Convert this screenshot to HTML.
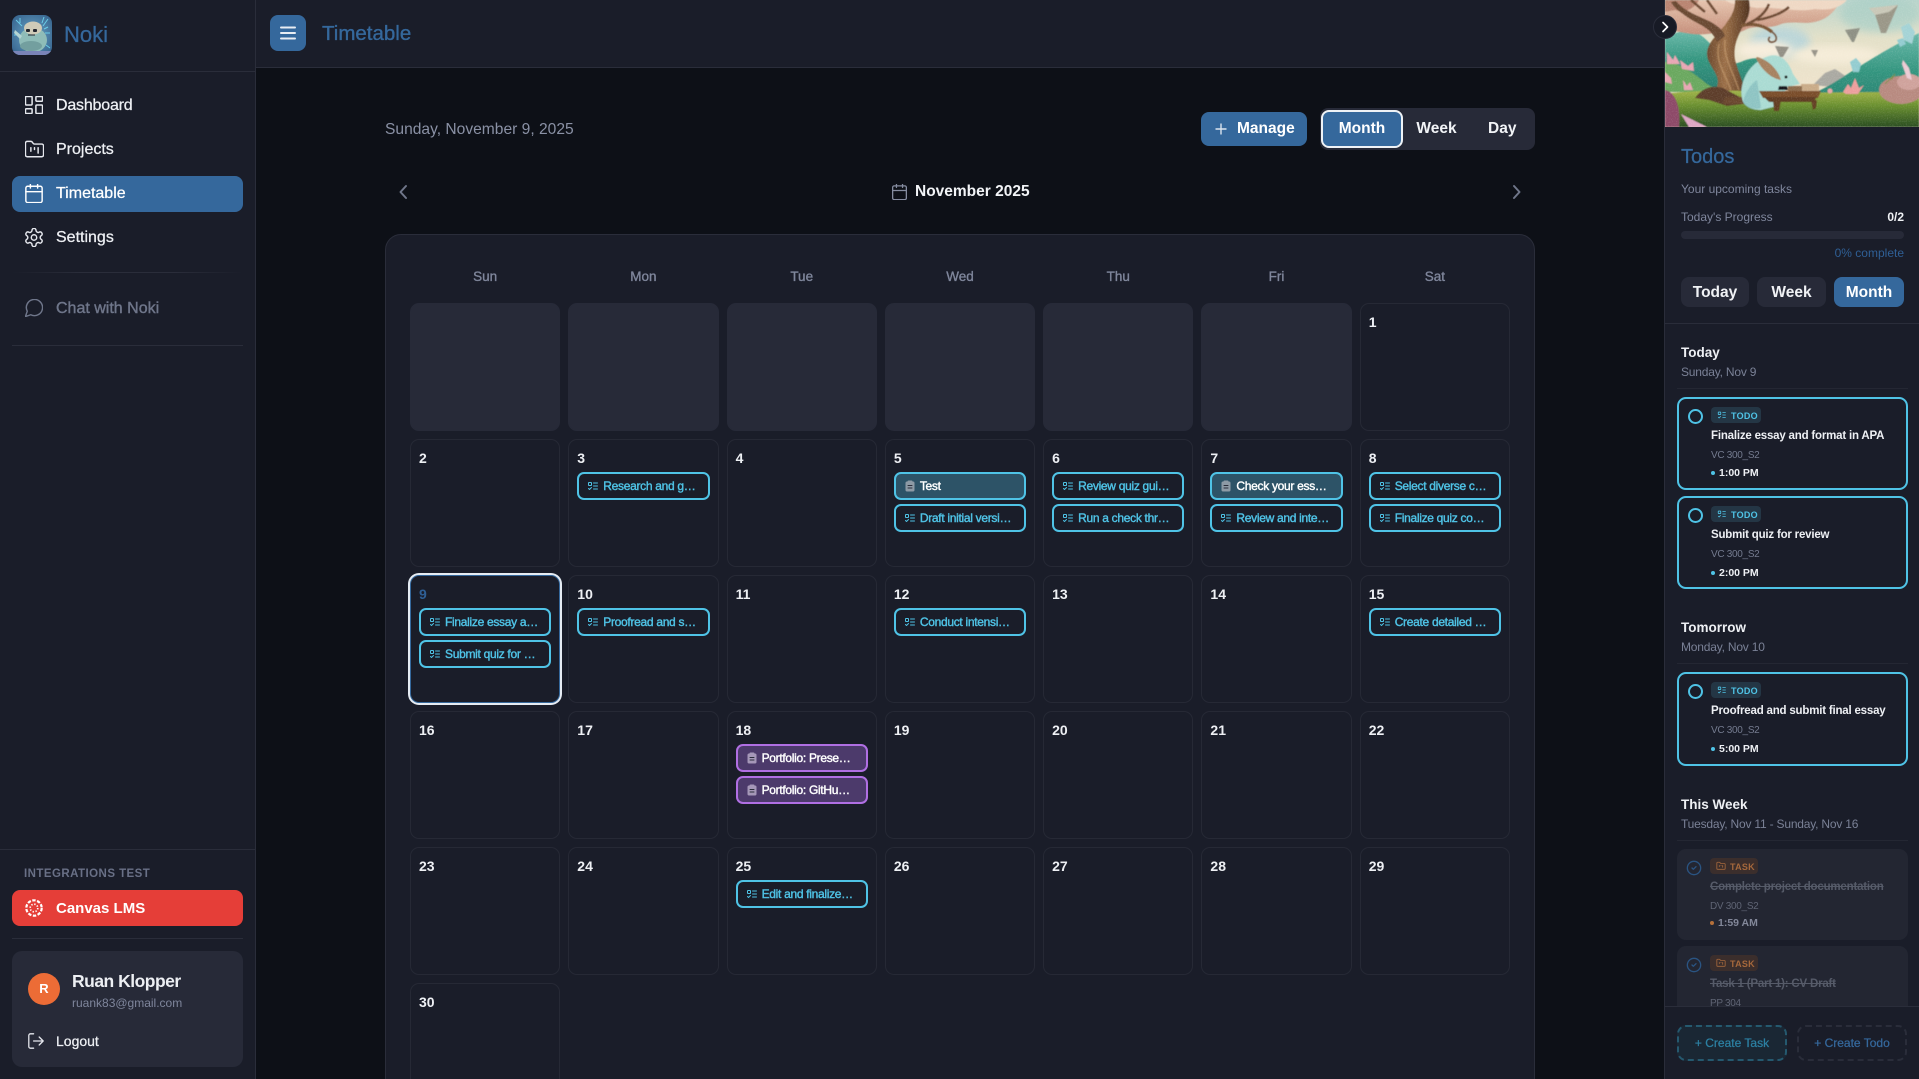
<!DOCTYPE html>
<html lang="en"><head><meta charset="utf-8"><title>Noki - Timetable</title>
<style>
*{box-sizing:border-box}
html,body{margin:0;padding:0;width:1919px;height:1079px;overflow:hidden;background:#0d1017}
body{position:relative;font-family:"Liberation Sans",sans-serif;color:#f0f2f5}
.a{position:absolute}
.t{position:absolute;white-space:nowrap;line-height:20px}
.m{-webkit-text-stroke:.25px currentColor}
.b{font-weight:700}
svg{display:block}
.ic{position:absolute;fill:none;stroke:currentColor;stroke-width:2;stroke-linecap:round;stroke-linejoin:round}
.nav{font-size:16px;left:56px;color:#eef0f4}
.grid{position:absolute;left:410px;display:grid;grid-template-columns:repeat(7,150.29px);column-gap:8px}
.wd{text-align:center;font-size:13.5px;line-height:20px;color:#7f869b;-webkit-text-stroke:.35px #7f869b}
.cell{position:relative;height:128px;margin-bottom:8px;border:1px solid #262935;border-radius:9px;background:#1a1d29}
.e{background:#272a38;border-color:#272a38}
.today{border-color:#35689c;box-shadow:0 0 0 2px #e6ecf3;border-radius:9px}
.n{position:absolute;left:8px;top:8px;font-size:14px;font-weight:700;line-height:20px;color:#eef0f4}
.cs{position:absolute;left:8px;top:32px;width:132.3px}
.c{display:flex;align-items:center;height:28px;margin-bottom:4px;border:2px solid #4fc3e6;border-radius:7px;padding-left:8px;color:#4fc3e6;font-size:12px;letter-spacing:-.3px;white-space:nowrap;-webkit-text-stroke:.4px currentColor;overflow:hidden}
.c svg{flex:none;width:12px;height:12px;margin-right:4px;fill:none;stroke:currentColor;stroke-width:2;stroke-linecap:round;stroke-linejoin:round}
.f{background:#2d5367;color:#fff}
.f svg{fill:#8d9aa5;stroke:#8d9aa5}
.p{background:#4c3a6b;border-color:#b06fe3;color:#fff}
.p svg{fill:#a597b8;stroke:#a597b8}
.card{position:absolute;left:1677px;width:231px;border:2px solid #4fc3e6;border-radius:9px;background:#1a1d29}
.ring{position:absolute;left:9px;top:10px;width:15px;height:15px;border:2px solid #4fc3e6;border-radius:50%}
.bdg{position:absolute;left:32px;top:8px;width:50px;height:16px;background:#243645;border-radius:4px;color:#4fc3e6;font-size:9px;font-weight:700;letter-spacing:.25px;line-height:18px;padding-left:20px}
.bdg svg{position:absolute;left:6px;top:3px;width:10px;height:10px;fill:none;stroke:currentColor;stroke-width:2}
.tt{position:absolute;left:32px;top:19px;font-size:11.5px;letter-spacing:-.2px;font-weight:700;color:#eef0f4;white-space:nowrap;line-height:36px;height:36px}
.cr{position:absolute;left:32px;top:47px;font-size:10px;letter-spacing:-.3px;color:#747b8f;line-height:20px}
.tm{position:absolute;left:40px;top:64px;font-size:10.5px;font-weight:700;color:#eef0f4;line-height:20px}
.dt{position:absolute;left:32px;top:72px;width:4px;height:4px;border-radius:50%;background:#4fc3e6}
.h{position:absolute;left:1681px;font-size:13.5px;font-weight:700;line-height:20px;color:#eef0f4}
.s{position:absolute;left:1681px;font-size:12px;letter-spacing:-.2px;line-height:20px;color:#7a8196;white-space:nowrap}
.ln{position:absolute;left:1677px;width:231px;height:1px;background:#242733}
.task{position:absolute;left:1677px;width:231px;height:91px;border-radius:9px;background:#232632}
.task svg.ck{position:absolute;left:9px;top:11px;width:16px;height:16px;fill:none;stroke:#2a5482;stroke-width:2;stroke-linecap:round;stroke-linejoin:round}
.task .bdg{left:33px;top:9px;width:48px;background:#3b2e2c;color:#a5683c;padding-left:20px}
.task .tt{left:33px;top:20px;color:#565b69;text-decoration:line-through}
.task .cr{left:33px;top:48px;color:#5f6474}
.task .tm{left:41px;top:64px;color:#83889a}
.task .dt{left:33px;top:72px;background:#b5703a}
.btn{position:absolute;text-align:center;border-radius:8px;font-size:15.5px;font-weight:700;color:#f0f2f5;background:#272a38;top:277px;height:30px;line-height:31px}
</style></head><body>
<svg width="0" height="0" style="position:absolute">
<symbol id="todo" viewBox="0 0 24 24"><rect x="3" y="5" width="6" height="6" rx="1"/><path d="m3 17 2 2 4-4M13 6h8M13 12h8M13 18h8"/></symbol>
<symbol id="clip" viewBox="0 0 24 24"><path d="M16 4h2a2 2 0 0 1 2 2v14a2 2 0 0 1-2 2H6a2 2 0 0 1-2-2V6a2 2 0 0 1 2-2h2"/><rect x="8" y="2" width="8" height="4" rx="1"/><path d="M8 11h8M8 16h8" stroke="#2a2d3a"/></symbol>
<symbol id="fk" viewBox="0 0 24 24"><path d="M4 20h16a2 2 0 0 0 2-2V8a2 2 0 0 0-2-2h-7.93a2 2 0 0 1-1.66-.9l-.82-1.2A2 2 0 0 0 7.93 3H4a2 2 0 0 0-2 2v13c0 1.1.9 2 2 2ZM8 10v4M12 10v2M16 10v6"/></symbol>
</svg>

<!-- main background -->
<div class="a" style="left:256px;top:0;width:1408px;height:1079px;background:#0d1017"></div>

<!-- SIDEBAR -->
<div class="a" style="left:0;top:0;width:256px;height:1079px;background:#1a1d29;border-right:1px solid #2a2d3a"></div>
<div class="a" style="left:0;top:71px;width:255px;height:1px;background:#2a2d3a"></div>
<svg class="a" style="left:12px;top:15px;border-radius:8px" width="40" height="40" viewBox="0 0 40 40">
<defs><radialGradient id="lg" cx=".5" cy=".5" r=".75"><stop offset="0" stop-color="#6aa6c8"/><stop offset="1" stop-color="#2f5a85"/></radialGradient></defs>
<rect width="40" height="40" fill="url(#lg)"/>
<g stroke="#72dcf4" stroke-width="1" opacity=".85"><path d="M4 5l6 6M36 4l-5 7M2 20h5M38 18h-5M34 30l4 3M8 8V3M30 8l2-6M36 12l-4 2"/></g>
<ellipse cx="21" cy="25" rx="14" ry="12.5" fill="#8fbcb8"/>
<ellipse cx="21" cy="13" rx="9" ry="6.5" fill="#cfcbb8"/>
<path d="M3 15l7 6-2 3-6-6z" fill="#b4d4d2"/>
<ellipse cx="19" cy="31" rx="11" ry="5" fill="#739f9f"/>
<rect x="14" y="14" width="4" height="3" rx="1" fill="#23262f"/><rect x="21" y="14" width="4" height="3" rx="1" fill="#23262f"/>
<path d="M16 20h7" stroke="#23262f" stroke-width="1"/>
<rect y="36" width="40" height="4" fill="#7a84b8"/>
</svg>
<div class="t m" style="left:64px;top:25px;font-size:22px;color:#35689c">Noki</div>

<svg class="ic" style="left:25px;top:96px;color:#e6e8ee;stroke-width:1.6" width="18" height="18" viewBox="2.5 2.5 19 19"><rect x="3" y="3" width="7" height="9" rx="1"/><rect x="14" y="3" width="7" height="5" rx="1"/><rect x="14" y="12" width="7" height="9" rx="1"/><rect x="3" y="16" width="7" height="5" rx="1"/></svg>
<div class="t nav m" style="top:96px;letter-spacing:-.2px">Dashboard</div>
<svg class="ic" style="left:25px;top:140px;color:#e6e8ee;stroke-width:1.6" width="19" height="19" viewBox="1.5 1.5 21 21"><path d="M4 20h16a2 2 0 0 0 2-2V8a2 2 0 0 0-2-2h-7.93a2 2 0 0 1-1.66-.9l-.82-1.2A2 2 0 0 0 7.93 3H4a2 2 0 0 0-2 2v13c0 1.1.9 2 2 2ZM8 10v4M12 10v2M16 10v6"/></svg>
<div class="t nav m" style="top:140px">Projects</div>
<div class="a" style="left:12px;top:176px;width:231px;height:36px;background:#35689c;border-radius:8px"></div>
<svg class="ic" style="left:25px;top:184px;color:#fff;stroke-width:1.6" width="18" height="19" viewBox="2.5 1.5 19 21"><path d="M8 2v4M16 2v4M3 10h18"/><rect x="3" y="4" width="18" height="18" rx="2"/></svg>
<div class="t nav m" style="top:184px;color:#fff">Timetable</div>
<svg class="ic" style="left:25px;top:228px;color:#e6e8ee;stroke-width:1.6" width="18" height="19" viewBox="2.5 1.5 19 21"><path d="M12.22 2h-.44a2 2 0 0 0-2 2v.18a2 2 0 0 1-1 1.73l-.43.25a2 2 0 0 1-2 0l-.15-.08a2 2 0 0 0-2.73.73l-.22.38a2 2 0 0 0 .73 2.73l.15.1a2 2 0 0 1 1 1.72v.51a2 2 0 0 1-1 1.74l-.15.09a2 2 0 0 0-.73 2.73l.22.38a2 2 0 0 0 2.73.73l.15-.08a2 2 0 0 1 2 0l.43.25a2 2 0 0 1 1 1.73V20a2 2 0 0 0 2 2h.44a2 2 0 0 0 2-2v-.18a2 2 0 0 1 1-1.73l.43-.25a2 2 0 0 1 2 0l.15.08a2 2 0 0 0 2.73-.73l.22-.39a2 2 0 0 0-.73-2.73l-.15-.08a2 2 0 0 1-1-1.74v-.5a2 2 0 0 1 1-1.74l.15-.09a2 2 0 0 0 .73-2.73l-.22-.38a2 2 0 0 0-2.73-.73l-.15.08a2 2 0 0 1-2 0l-.43-.25a2 2 0 0 1-1-1.73V4a2 2 0 0 0-2-2z"/><circle cx="12" cy="12" r="3"/></svg>
<div class="t nav m" style="top:228px">Settings</div>
<div class="a" style="left:12px;top:272px;width:231px;height:1px;background:linear-gradient(90deg,#1a1d29,#2a2d3a 30%,#2a2d3a 70%,#1a1d29)"></div>
<svg class="ic" style="left:25px;top:299px;color:#6f768a;stroke-width:1.6" width="18" height="18" viewBox="1.5 2.5 20 20"><path d="M7.9 20A9 9 0 1 0 4 16.1L2 22Z"/></svg>
<div class="t nav m" style="top:299px;color:#6f768a;-webkit-text-stroke:.4px #6f768a">Chat with Noki</div>
<div class="a" style="left:12px;top:345px;width:231px;height:1px;background:#2a2d3a"></div>

<div class="a" style="left:0;top:849px;width:255px;height:1px;background:#2a2d3a"></div>
<div class="t b" style="left:24px;top:864px;font-size:11.5px;letter-spacing:.45px;color:#697086">INTEGRATIONS TEST</div>
<div class="a" style="left:12px;top:890px;width:231px;height:36px;background:#e53e38;border-radius:8px"></div>
<svg class="a" style="left:25px;top:899px" width="18" height="18" viewBox="0 0 18 18" fill="none" stroke="#fff"><circle cx="9" cy="9" r="7.7" stroke-width="2.2" stroke-dasharray="3.4 1.5"/><circle cx="9" cy="9" r="3.8" stroke-width="1.6" stroke-dasharray="1.4 1.6"/></svg>
<div class="t nav b" style="top:899px;color:#fff;font-size:15px">Canvas LMS</div>
<div class="a" style="left:12px;top:938px;width:231px;height:1px;background:#2a2d3a"></div>
<div class="a" style="left:12px;top:951px;width:231px;height:116px;background:#272a38;border-radius:10px"></div>
<div class="a" style="left:28px;top:973px;width:32px;height:32px;border-radius:50%;background:#ec6c36;color:#fff;font-size:13px;font-weight:700;text-align:center;line-height:32px">R</div>
<div class="t b" style="left:72px;top:971px;font-size:17.5px;color:#edeff3;letter-spacing:-.5px">Ruan Klopper</div>
<div class="t" style="left:72px;top:993px;font-size:12px;color:#7f869c">ruank83@gmail.com</div>
<svg class="ic" style="left:28px;top:1033px;color:#e6e8ee;stroke-width:1.6" width="16" height="16" viewBox="2 2 20 20"><path d="M9 21H5a2 2 0 0 1-2-2V5a2 2 0 0 1 2-2h4M16 17l5-5-5-5M21 12H9"/></svg>
<div class="t m" style="left:56px;top:1031px;font-size:14px;color:#eef0f4">Logout</div>

<!-- HEADER -->
<div class="a" style="left:256px;top:0;width:1408px;height:68px;background:#1a1d29;border-bottom:1px solid #2a2d3a"></div>
<div class="a" style="left:270px;top:15px;width:36px;height:36px;border-radius:8px;background:#35689c"></div>
<svg class="a" style="left:280px;top:26px" width="16" height="14" viewBox="0 0 16 14" stroke="#e8edf3" stroke-width="2" stroke-linecap="round"><path d="M1 1.5h14M1 7h14M1 12.5h14"/></svg>
<div class="t m" style="left:322px;top:24px;font-size:20.5px;color:#35689c;-webkit-text-stroke:.35px #35689c">Timetable</div>

<!-- TOOLBAR -->
<div class="t" style="left:385px;top:120px;font-size:15.6px;color:#8a91a5">Sunday, November 9, 2025</div>
<div class="a" style="left:1201px;top:112px;width:106px;height:34px;background:#35689c;border-radius:8px"></div>
<svg class="a" style="left:1215px;top:123px" width="12" height="12" viewBox="0 0 12 12" stroke="#dbe4ee" stroke-width="1.4"><path d="M6 .5v11M.5 6h11"/></svg>
<div class="t b" style="left:1237px;top:119px;font-size:15.5px;color:#fff">Manage</div>
<div class="a" style="left:1320px;top:108px;width:215px;height:42px;background:#272a38;border-radius:8px"></div>
<div class="a" style="left:1321px;top:110px;width:82px;height:38px;background:#35689c;border:2px solid #eef2f6;border-radius:8px;text-align:center;line-height:33px;font-size:15.5px;font-weight:700;color:#fff">Month</div>
<div class="t b" style="left:1416px;width:41px;text-align:center;top:119px;font-size:15.5px;color:#f2f4f7">Week</div>
<div class="t b" style="left:1488px;width:26px;text-align:center;top:119px;font-size:15.5px;color:#f2f4f7">Day</div>

<svg class="ic" style="left:398px;top:184px;color:#6f768a;stroke-width:2" width="10" height="16" viewBox="0 0 10 16"><path d="M8 2L2.5 8 8 14"/></svg>
<svg class="ic" style="left:1512px;top:184px;color:#6f768a;stroke-width:2" width="10" height="16" viewBox="0 0 10 16"><path d="M2 2l5.5 6L2 14"/></svg>
<svg class="ic" style="left:892px;top:184px;color:#858ca0;stroke-width:1.7" width="15" height="16" viewBox="2.5 1.5 19 21"><path d="M8 2v4M16 2v4M3 10h18"/><rect x="3" y="4" width="18" height="18" rx="2"/></svg>
<div class="t b" style="left:915px;top:182px;font-size:15.5px;color:#f2f4f7">November 2025</div>

<!-- CALENDAR -->
<div class="a" style="left:385px;top:234px;width:1150px;height:860px;background:#1a1d29;border:1px solid #2a2d3a;border-radius:16px"></div>
<div class="grid" style="top:267px">
<div class="wd">Sun</div><div class="wd">Mon</div><div class="wd">Tue</div><div class="wd">Wed</div><div class="wd">Thu</div><div class="wd">Fri</div><div class="wd">Sat</div>
</div>
<div class="grid" style="top:303px">
<div class="cell e"></div><div class="cell e"></div><div class="cell e"></div><div class="cell e"></div><div class="cell e"></div><div class="cell e"></div>
<div class="cell"><div class="n">1</div></div>

<div class="cell"><div class="n">2</div></div>
<div class="cell"><div class="n">3</div><div class="cs"><div class="c"><svg><use href="#todo"/></svg>Research and g…</div></div></div>
<div class="cell"><div class="n">4</div></div>
<div class="cell"><div class="n">5</div><div class="cs"><div class="c f"><svg><use href="#clip"/></svg>Test</div><div class="c"><svg><use href="#todo"/></svg>Draft initial versi…</div></div></div>
<div class="cell"><div class="n">6</div><div class="cs"><div class="c"><svg><use href="#todo"/></svg>Review quiz gui…</div><div class="c"><svg><use href="#todo"/></svg>Run a check thr…</div></div></div>
<div class="cell"><div class="n">7</div><div class="cs"><div class="c f"><svg><use href="#clip"/></svg>Check your ess…</div><div class="c"><svg><use href="#todo"/></svg>Review and inte…</div></div></div>
<div class="cell"><div class="n">8</div><div class="cs"><div class="c"><svg><use href="#todo"/></svg>Select diverse c…</div><div class="c"><svg><use href="#todo"/></svg>Finalize quiz co…</div></div></div>

<div class="cell today"><div class="n" style="color:#2f5f95">9</div><div class="cs"><div class="c"><svg><use href="#todo"/></svg>Finalize essay a…</div><div class="c"><svg><use href="#todo"/></svg>Submit quiz for …</div></div></div>
<div class="cell"><div class="n">10</div><div class="cs"><div class="c"><svg><use href="#todo"/></svg>Proofread and s…</div></div></div>
<div class="cell"><div class="n">11</div></div>
<div class="cell"><div class="n">12</div><div class="cs"><div class="c"><svg><use href="#todo"/></svg>Conduct intensi…</div></div></div>
<div class="cell"><div class="n">13</div></div>
<div class="cell"><div class="n">14</div></div>
<div class="cell"><div class="n">15</div><div class="cs"><div class="c"><svg><use href="#todo"/></svg>Create detailed …</div></div></div>

<div class="cell"><div class="n">16</div></div>
<div class="cell"><div class="n">17</div></div>
<div class="cell"><div class="n">18</div><div class="cs"><div class="c p"><svg><use href="#clip"/></svg>Portfolio: Prese…</div><div class="c p"><svg><use href="#clip"/></svg>Portfolio: GitHu…</div></div></div>
<div class="cell"><div class="n">19</div></div>
<div class="cell"><div class="n">20</div></div>
<div class="cell"><div class="n">21</div></div>
<div class="cell"><div class="n">22</div></div>

<div class="cell"><div class="n">23</div></div>
<div class="cell"><div class="n">24</div></div>
<div class="cell"><div class="n">25</div><div class="cs"><div class="c"><svg><use href="#todo"/></svg>Edit and finalize…</div></div></div>
<div class="cell"><div class="n">26</div></div>
<div class="cell"><div class="n">27</div></div>
<div class="cell"><div class="n">28</div></div>
<div class="cell"><div class="n">29</div></div>

<div class="cell"><div class="n">30</div></div>
</div>

<!-- RIGHT PANEL -->
<div class="a" style="left:1664px;top:0;width:255px;height:1079px;background:#1a1d29;border-left:1px solid #2a2d3a"></div>
<svg class="a" style="left:1665px;top:0" width="254" height="127" viewBox="0 0 254 127" preserveAspectRatio="none">
<defs>
<linearGradient id="sky" x1="0" y1="0" x2="0" y2="1"><stop offset="0" stop-color="#b9d4cc"/><stop offset=".3" stop-color="#e3e0c8"/><stop offset=".7" stop-color="#efe3cc"/><stop offset="1" stop-color="#e0cdb8"/></linearGradient>
<linearGradient id="gr" x1="0" y1="0" x2="0" y2="1"><stop offset="0" stop-color="#a0b348"/><stop offset=".4" stop-color="#6b9030"/><stop offset="1" stop-color="#2a4d22"/></linearGradient>
<linearGradient id="tr" x1="0" y1="0" x2="1" y2="0"><stop offset="0" stop-color="#553622"/><stop offset=".5" stop-color="#9c7048"/><stop offset="1" stop-color="#4c2f1d"/></linearGradient>
<linearGradient id="hl" x1="0" y1="0" x2="0" y2="1"><stop offset="0" stop-color="#6ab8a9"/><stop offset=".5" stop-color="#33957f"/><stop offset="1" stop-color="#287d6f"/></linearGradient>
<linearGradient id="fo" x1="0" y1="0" x2="0" y2="1"><stop offset="0" stop-color="#e6c4ae"/><stop offset="1" stop-color="#c58f7b"/></linearGradient>
<filter id="bl" x="-10%" y="-10%" width="120%" height="120%"><feGaussianBlur stdDeviation=".6"/></filter>
<filter id="bl2" x="-20%" y="-20%" width="140%" height="140%"><feGaussianBlur stdDeviation="4"/></filter>
<filter id="noise" x="0" y="0" width="100%" height="100%"><feTurbulence type="fractalNoise" baseFrequency=".8" numOctaves="2" seed="4"/><feColorMatrix values="0 0 0 0 1  0 0 0 0 1  0 0 0 0 .95  1.6 0 0 0 -.72"/></filter>
</defs>
<rect width="254" height="127" fill="url(#sky)"/>
<ellipse cx="115" cy="42" rx="30" ry="16" fill="#bcd6d8" filter="url(#bl2)"/>
<ellipse cx="215" cy="14" rx="40" ry="18" fill="#a9cfc6" opacity=".7" filter="url(#bl2)"/>
<ellipse cx="100" cy="50" rx="28" ry="9" fill="#f7eddc" filter="url(#bl2)"/>
<ellipse cx="170" cy="55" rx="45" ry="9" fill="#f5ecd8" filter="url(#bl2)"/>
<g filter="url(#bl)">
<path d="M148 85l12-12 10-4 12 8 10-3 6 16z" fill="#aaa9a2"/>
<path d="M146 94C170 86 195 62 254 33V110H140z" fill="url(#hl)"/>
<path d="M0 37C12 32 24 28 34 34C46 42 54 54 62 66L76 62C84 58 96 56 104 62L118 90H0z" fill="url(#hl)"/>
<path d="M0 62C14 62 30 74 42 84L56 92H0z" fill="#6ba85e"/>
<path d="M208 8l25-3-12 28-5 0z" fill="#9a9788"/><path d="M204 8l29-3-9 7-14 3z" fill="#c9c8b8"/>
<path d="M180 30l15-2-6 14-2 0z" fill="#8e9084"/>
<path d="M110 46l14 1-6 10-3 0z" fill="#928f85"/>
<path d="M146 50l7 0-3 7z" fill="#979387"/>
<path d="M236 27l8-4 6 9-3 12-8-4z" fill="#a4d3d6"/><path d="M185 62l6-4 5 6-2 8-6 0zM232 40l6-2 3 6-6 3z" fill="#93ccd0"/>
<!-- foliage -->
<path d="M0 0H176C172 8 166 16 156 20C142 26 130 20 116 24C104 30 90 24 80 30C68 36 54 32 42 34C26 36 12 30 0 30z" fill="url(#fo)"/>
<path d="M60 0H182C176 7 166 11 150 9C130 13 110 6 92 8C78 5 66 5 60 0z" fill="#efd8c4"/>
<path d="M0 0H34C30 8 20 14 10 10L0 12z" fill="#b98471"/>
<!-- tree -->
<path d="M70 0h14C86 10 84 18 78 26C72 38 68 46 70 60C74 74 78 82 82 96L86 104H34C44 98 52 92 53 82C53 72 42 64 42 54C42 42 54 34 62 22C68 14 70 8 70 0z" fill="url(#tr)"/>
<path d="M52 42C46 26 30 24 18 14C12 10 8 6 6 2L11 1C20 12 34 16 46 22C54 27 58 30 60 36z" fill="#6b4830"/>
<path d="M76 26C88 22 100 26 107 32" stroke="#7a5436" stroke-width="3.2" fill="none"/>
<path d="M107 32c5 3 6 9 1 10-4 1-6-3-3-5" stroke="#70503a" stroke-width="1.5" fill="none"/>
<path d="M82 24C92 20 100 14 104 4M92 20C104 18 116 14 124 7M42 0L52 14M26 0L40 12" stroke="#6d4a30" stroke-width="2.6" fill="none"/>
<path d="M54 44C50 60 58 70 66 90M60 40C58 56 66 68 74 90" stroke="#c49a6c" stroke-width="1.6" fill="none" opacity=".6"/>
<!-- grass -->
<path d="M0 94C30 90 70 90 110 92C160 94 210 90 254 94V127H0z" fill="url(#gr)"/>
<path d="M30 98C38 87 48 85 58 88L86 103L62 106L44 100z" fill="#5d3e2a"/>
<path d="M60 97h26v7H58z" fill="#6a472f"/>
<!-- plants left -->
<path d="M0 90C10 92 16 106 14 127H0z" fill="#8d4a68"/>
<path d="M16 114l26 13H24z" fill="#dda6c4"/>
<path d="M2 52l6 8 2-5 5 9-13 0zM15 60l8 6 5-4 1 9-12-2zM18 80l4 6 3-4 3 8-9 0zM0 72l6 6 1 6-7-2z" fill="#e8a6b4"/>
<path d="M178 92l5-8 3 4 4-10 4 10 5-3-6 9-12 0z" fill="#ec9f9d"/>
<circle cx="165" cy="91" r="2.5" fill="#e8a6a6"/>
<!-- bush right -->
<ellipse cx="236" cy="90" rx="22" ry="14" fill="#b88a80"/>
<ellipse cx="244" cy="82" rx="12" ry="8" fill="#cfa29c"/>
<path d="M238 60l6 8 3 12-5-2-5-14z" fill="#eccbd4"/>
<path d="M220 84l8-8M226 80l4-6" stroke="#7f8f4a" stroke-width="1"/>
<!-- creature -->
<path d="M78 102C72 84 84 62 104 56C116 53 124 62 128 74L135 84L122 87L112 106L96 110C88 110 82 108 78 102z" fill="#aadbd3"/>
<path d="M78 102C80 92 86 84 92 80L96 108C88 110 82 108 78 102z" fill="#8ec4c3"/>
<path d="M92 57C104 60 113 70 116 80C104 78 95 67 91 58z" fill="#a6815f"/>
<circle cx="121" cy="77" r="1.5" fill="#111"/>
<path d="M114 86h8l1 4h-10z" fill="#15191d"/>
<!-- table -->
<path d="M94 91H156L153 98H98z" fill="#7a4d2c"/>
<path d="M99 97H152L148 102H104z" fill="#5e3b23"/>
<path d="M108 100h8l-2 11h-5zM146 100h6l-1 8-3 2z" fill="#623d24"/>
<path d="M136 84h18v7h-18z" fill="#c9ab88"/><path d="M123 86h14v5h-14z" fill="#8c6a4c"/>
</g>
<rect width="254" height="127" filter="url(#noise)" opacity=".2"/>
</svg>
<div class="a" style="left:1653px;top:15px;width:24px;height:24px;border-radius:50%;background:#171a25;border:1px solid #2a2d3a"></div>
<svg class="a" style="left:1660px;top:21px" width="10" height="12" viewBox="0 0 10 12" fill="none" stroke="#fff" stroke-width="1.7" stroke-linecap="round" stroke-linejoin="round"><path d="M3 1.5L7.5 6 3 10.5"/></svg>

<div class="t m" style="left:1681px;top:147px;font-size:20px;color:#35689c">Todos</div>
<div class="t" style="left:1681px;top:179px;font-size:12px;color:#7f869c">Your upcoming tasks</div>
<div class="t" style="left:1681px;top:207px;font-size:12px;color:#7f869c">Today's Progress</div>
<div class="t b" style="right:15px;top:207px;font-size:12px;color:#f0f2f5">0/2</div>
<div class="a" style="left:1681px;top:231px;width:223px;height:8px;border-radius:4px;background:#272a38"></div>
<div class="t" style="right:15px;top:243px;font-size:12px;color:#2f5f95">0% complete</div>
<div class="btn" style="left:1681px;width:68px">Today</div>
<div class="btn" style="left:1757px;width:69px">Week</div>
<div class="btn" style="left:1834px;width:70px;background:#35689c;color:#fff">Month</div>
<div class="a" style="left:1665px;top:323px;width:254px;height:1px;background:#2a2d3a"></div>

<div class="h" style="top:343px">Today</div>
<div class="s" style="top:362px">Sunday, Nov 9</div>
<div class="ln" style="top:388px"></div>
<div class="card" style="top:397px;height:93px">
<div class="ring"></div><div class="bdg"><svg><use href="#todo"/></svg>TODO</div>
<div class="tt">Finalize essay and format in APA</div><div class="cr">VC 300_S2</div><div class="dt"></div><div class="tm">1:00 PM</div>
</div>
<div class="card" style="top:496px;height:93px">
<div class="ring"></div><div class="bdg"><svg><use href="#todo"/></svg>TODO</div>
<div class="tt">Submit quiz for review</div><div class="cr">VC 300_S2</div><div class="dt" style="top:73px"></div><div class="tm" style="top:65px">2:00 PM</div>
</div>
<div class="h" style="top:618px">Tomorrow</div>
<div class="s" style="top:637px">Monday, Nov 10</div>
<div class="ln" style="top:663px"></div>
<div class="card" style="top:672px;height:94px">
<div class="ring"></div><div class="bdg"><svg><use href="#todo"/></svg>TODO</div>
<div class="tt">Proofread and submit final essay</div><div class="cr">VC 300_S2</div><div class="dt" style="top:73px"></div><div class="tm" style="top:65px">5:00 PM</div>
</div>
<div class="h" style="top:795px">This Week</div>
<div class="s" style="top:814px">Tuesday, Nov 11 - Sunday, Nov 16</div>
<div class="ln" style="top:840px"></div>
<div class="task" style="top:849px">
<svg class="ck" viewBox="0 0 24 24"><circle cx="12" cy="12" r="10"/><path d="m9 12 2 2 4-4"/></svg>
<div class="bdg"><svg><use href="#fk"/></svg>TASK</div>
<div class="tt">Complete project documentation</div><div class="cr">DV 300_S2</div><div class="dt"></div><div class="tm">1:59 AM</div>
</div>
<div class="a" style="left:1665px;top:946px;width:254px;height:60px;overflow:hidden">
<div class="task" style="left:12px;top:0">
<svg class="ck" viewBox="0 0 24 24"><circle cx="12" cy="12" r="10"/><path d="m9 12 2 2 4-4"/></svg>
<div class="bdg"><svg><use href="#fk"/></svg>TASK</div>
<div class="tt">Task 1 (Part 1): CV Draft</div><div class="cr">PP 304</div>
</div></div>
<div class="a" style="left:1665px;top:1006px;width:254px;height:1px;background:#2a2d3a"></div>
<div class="a" style="left:1677px;top:1025px;width:110px;height:36px;border:2px dashed #25596f;border-radius:9px;background:#1a2734;text-align:center;line-height:32px;font-size:12px;color:#2c80a3;-webkit-text-stroke:.25px #2c80a3">+ Create Task</div>
<div class="a" style="left:1797px;top:1025px;width:110px;height:36px;border:2px dashed #2a2d3a;border-radius:9px;text-align:center;line-height:32px;font-size:12px;color:#35689c;-webkit-text-stroke:.25px #35689c">+ Create Todo</div>
</body></html>
